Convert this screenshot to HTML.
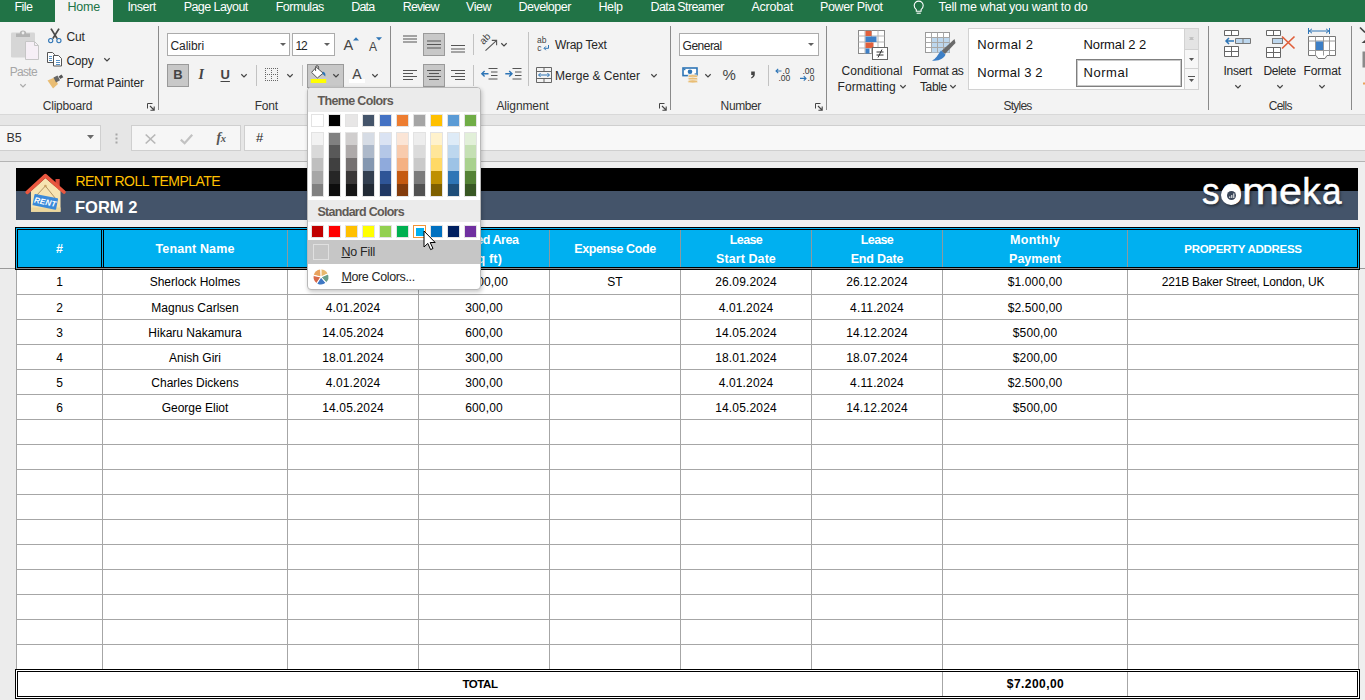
<!DOCTYPE html><html><head><meta charset="utf-8"><title>Rent Roll Template</title><style>
*{box-sizing:border-box;margin:0;padding:0}
html,body{width:1365px;height:700px;overflow:hidden;background:#e6e6e6}
body{position:relative;font-family:"Liberation Sans",sans-serif;font-size:12px;color:#262626}
.abs{position:absolute}
.t{position:absolute;white-space:nowrap;line-height:14px;height:14px}
.c{transform:translateX(-50%)}
#tabs{left:0;top:0;width:1365px;height:22px;background:#217346}
#tabs .t{color:#fff;font-size:12.5px;top:-1px;line-height:16px;height:16px}
#hometab{left:55px;top:0;width:58px;height:23px;background:#f3f3f3}
#ribbon{left:0;top:22px;width:1365px;height:92px;background:#f3f3f3}
#rbot{left:0;top:114px;width:1365px;height:1px;background:#d8d8d8}
.vsep{position:absolute;width:1px;background:#c2c2c2}
.gsep{position:absolute;width:1px;background:#8a8a8a;top:26px;height:84px}
.box{position:absolute;background:#fff;border:1px solid #ababab}
.btnsel{position:absolute;background:#c8c8c8;border:1px solid #9a9a9a}
.lbl{color:#333}
svg{position:absolute;overflow:visible}
/* sheet */
#sheetbg{left:0;top:162px;width:1365px;height:538px;background:#efefef}
.cell{position:absolute;white-space:nowrap;text-align:center;font-size:12px;line-height:14px;color:#000;transform:translateX(-50%)}
.hd{position:absolute;white-space:nowrap;text-align:center;font-size:12.5px;font-weight:bold;line-height:14px;color:#fff;transform:translateX(-50%)}
</style></head><body>
<div id="tabs" class="abs">
<div id="hometab" class="abs"></div>
<div class="t" style="left:14.5px;color:#fff;letter-spacing:-0.539px">File</div>
<div class="t" style="left:67.4px;color:#217346;letter-spacing:-0.186px">Home</div>
<div class="t" style="left:127.4px;color:#fff;letter-spacing:-0.494px">Insert</div>
<div class="t" style="left:183.7px;color:#fff;letter-spacing:-0.564px">Page Layout</div>
<div class="t" style="left:275.7px;color:#fff;letter-spacing:-0.487px">Formulas</div>
<div class="t" style="left:351.2px;color:#fff;letter-spacing:-0.777px">Data</div>
<div class="t" style="left:402.7px;color:#fff;letter-spacing:-0.833px">Review</div>
<div class="t" style="left:466px;color:#fff;letter-spacing:-0.419px">View</div>
<div class="t" style="left:518.5px;color:#fff;letter-spacing:-0.520px">Developer</div>
<div class="t" style="left:598.4px;color:#fff;letter-spacing:-0.355px">Help</div>
<div class="t" style="left:650.6px;color:#fff;letter-spacing:-0.622px">Data Streamer</div>
<div class="t" style="left:751.4px;color:#fff;letter-spacing:-0.228px">Acrobat</div>
<div class="t" style="left:820px;color:#fff;letter-spacing:-0.364px">Power Pivot</div>
<div class="t" style="left:938.6px;color:#fff;letter-spacing:-0.194px">Tell me what you want to do</div>
<svg style="left:912px;top:0px" width="14" height="15" viewBox="0 0 14 15"><path d="M4.3 9.6C2.9 8.6 2.2 7.3 2.2 5.6A4.5 4.5 0 0 1 11.2 5.6C11.2 7.3 10.5 8.6 9.1 9.6V11.3H4.3Z" fill="none" stroke="#fff" stroke-width="1.1"/><path d="M4.6 13.2H8.8" stroke="#fff" stroke-width="1.1"/></svg>
</div>
<div id="ribbon" class="abs"></div><div id="rbot" class="abs"></div>
<svg style="left:10px;top:29px" width="31" height="32" viewBox="0 0 31 32">
<rect x="1" y="3.5" width="24" height="25" rx="1.2" fill="#d6d6d6"/>
<path d="M6 8V4.6H9.8A3.2 3.2 0 0 1 16.2 4.6H20V8Z" fill="#b4b4b4"/>
<circle cx="13" cy="4" r="1.4" fill="#eee"/>
<path d="M15.5 12.5H24.5L28.5 16.5V30.5H15.5Z" fill="#f6eff6" stroke="#c6c6c6" stroke-width="1"/>
<path d="M24.5 12.5V16.5H28.5" fill="none" stroke="#c6c6c6" stroke-width="1"/>
</svg>
<div class="t " style="left:9.7px;top:65.00px;font-size:12px;line-height:14px;height:14px;color:#a6a6a6;letter-spacing:-0.677px;">Paste</div>
<svg style="left:19.5px;top:84.4px" width="6" height="3.2" viewBox="0 0 6 3.2"><path d="M0.3 0.3 L3.0 2.9000000000000004 L5.7 0.3" fill="none" stroke="#aaa" stroke-width="1.2"/></svg>
<svg style="left:47px;top:28px" width="16" height="16" viewBox="0 0 16 16">
<path d="M4 0.6L10.2 10.6M12 0.6L5.8 10.6" stroke="#4a4a4a" stroke-width="1.8" fill="none"/>
<circle cx="3.7" cy="12.6" r="2.1" fill="none" stroke="#2e75b6" stroke-width="1.1"/>
<circle cx="11.9" cy="12.6" r="2.1" fill="none" stroke="#2e75b6" stroke-width="1.1"/>
</svg>
<div class="t " style="left:66.4px;top:30.00px;font-size:12px;line-height:14px;height:14px;color:#262626;letter-spacing:-0.062px;">Cut</div>
<svg style="left:46px;top:51px" width="17" height="16" viewBox="0 0 17 16">
<path d="M1.5 1.5H6.5L8.5 3.5V11.5H1.5Z" fill="#fff" stroke="#555" stroke-width="1"/>
<path d="M3 5H6M3 7H6M3 9H6" stroke="#2e75b6" stroke-width="0.8" shape-rendering="crispEdges"/>
<path d="M7.5 4.5H12.5L15.5 7.5V15H7.5Z" fill="#fff" stroke="#555" stroke-width="1"/>
<path d="M9.5 9H13.5M9.5 11H13.5M9.5 13H13.5" stroke="#2e75b6" stroke-width="0.8" shape-rendering="crispEdges"/>
</svg>
<div class="t " style="left:66.4px;top:54.00px;font-size:12px;line-height:14px;height:14px;color:#262626;letter-spacing:-0.204px;">Copy</div>
<svg style="left:104.0px;top:57.9px" width="6" height="3.2" viewBox="0 0 6 3.2"><path d="M0.3 0.3 L3.0 2.9000000000000004 L5.7 0.3" fill="none" stroke="#444" stroke-width="1.2"/></svg>
<svg style="left:47px;top:74px" width="17" height="16" viewBox="0 0 17 16">
<path d="M0.5 6.5L7.5 3.5L11 10L6 14.5Z" fill="#e9bd74"/>
<path d="M6.5 3.6L10.5 1.6L13 6.2L9 8.6Z" fill="#666"/>
<path d="M11.6 2.6L14.5 0.6L16.3 3.2L13.2 5Z" fill="#555"/>
</svg>
<div class="t " style="left:66.4px;top:76.00px;font-size:12px;line-height:14px;height:14px;color:#262626;letter-spacing:-0.126px;">Format Painter</div>
<div class="t " style="left:42.7px;top:99.00px;font-size:12px;line-height:14px;height:14px;color:#333;letter-spacing:-0.197px;">Clipboard</div>
<svg style="left:147px;top:102.5px" width="8" height="8" viewBox="0 0 8 8"><path d="M0.5 5.5V0.5H5.5" fill="none" stroke="#444" stroke-width="1"/><path d="M3 3L7 7M7.2 3.4V7.2H3.4" fill="none" stroke="#444" stroke-width="1.1"/></svg>
<div class="gsep" style="left:158px"></div>
<div class="box" style="left:167px;top:33px;width:123px;height:23px"></div>
<div class="t " style="left:170.5px;top:39.00px;font-size:12px;line-height:14px;height:14px;color:#262626;letter-spacing:-0.074px;">Calibri</div>
<svg style="left:279.5px;top:43.0px" width="6" height="3" viewBox="0 0 6 3"><path d="M0 0H6L3.0 3Z" fill="#606060"/></svg>
<div class="box" style="left:292px;top:33px;width:43px;height:23px"></div>
<div class="t " style="left:295.6px;top:39.00px;font-size:12px;line-height:14px;height:14px;color:#262626;letter-spacing:-1.180px;">12</div>
<svg style="left:324.0px;top:43.0px" width="6" height="3" viewBox="0 0 6 3"><path d="M0 0H6L3.0 3Z" fill="#606060"/></svg>
<div class="t " style="left:343.5px;top:37.00px;font-size:14.5px;line-height:16.5px;height:16.5px;color:#444;">A</div>
<svg style="left:352.5px;top:36.5px" width="6" height="4" viewBox="0 0 6 4"><path d="M0 3.5L3 0.3L6 3.5Z" fill="#2e75b6"/></svg>
<div class="t " style="left:369px;top:40.00px;font-size:12px;line-height:14px;height:14px;color:#444;">A</div>
<svg style="left:375.5px;top:37px" width="6" height="4" viewBox="0 0 6 4"><path d="M0 0.3H6L3 3.5Z" fill="#2e75b6"/></svg>
<div class="btnsel" style="left:167px;top:64px;width:22px;height:23px"></div>
<div class="t " style="left:173.2px;top:67.00px;font-size:13px;line-height:15px;height:15px;color:#444;font-weight:bold">B</div>
<div class="t " style="left:198.5px;top:67.00px;font-size:13px;line-height:15px;height:15px;color:#444;font-style:italic;font-family:'Liberation Serif',serif;font-weight:bold;font-size:14px">I</div>
<div class="t " style="left:220.5px;top:67.00px;font-size:13px;line-height:15px;height:15px;color:#444;font-weight:bold;text-decoration:underline;text-underline-offset:1.5px">U</div>
<svg style="left:240.5px;top:73.9px" width="6" height="3.2" viewBox="0 0 6 3.2"><path d="M0.3 0.3 L3.0 2.9000000000000004 L5.7 0.3" fill="none" stroke="#444" stroke-width="1.2"/></svg>
<div class="vsep" style="left:256px;top:65px;height:21px"></div>
<svg style="left:265px;top:68px" width="13" height="13" viewBox="0 0 13 13" fill="#666" shape-rendering="crispEdges"><rect x="0" y="0" width="1" height="1"/><rect x="0" y="6" width="1" height="1"/><rect x="0" y="12" width="1" height="1"/><rect x="0" y="0" width="1" height="1"/><rect x="6" y="0" width="1" height="1"/><rect x="12" y="0" width="1" height="1"/><rect x="2" y="0" width="1" height="1"/><rect x="2" y="6" width="1" height="1"/><rect x="2" y="12" width="1" height="1"/><rect x="0" y="2" width="1" height="1"/><rect x="6" y="2" width="1" height="1"/><rect x="12" y="2" width="1" height="1"/><rect x="4" y="0" width="1" height="1"/><rect x="4" y="6" width="1" height="1"/><rect x="4" y="12" width="1" height="1"/><rect x="0" y="4" width="1" height="1"/><rect x="6" y="4" width="1" height="1"/><rect x="12" y="4" width="1" height="1"/><rect x="6" y="0" width="1" height="1"/><rect x="6" y="6" width="1" height="1"/><rect x="6" y="12" width="1" height="1"/><rect x="0" y="6" width="1" height="1"/><rect x="6" y="6" width="1" height="1"/><rect x="12" y="6" width="1" height="1"/><rect x="8" y="0" width="1" height="1"/><rect x="8" y="6" width="1" height="1"/><rect x="8" y="12" width="1" height="1"/><rect x="0" y="8" width="1" height="1"/><rect x="6" y="8" width="1" height="1"/><rect x="12" y="8" width="1" height="1"/><rect x="10" y="0" width="1" height="1"/><rect x="10" y="6" width="1" height="1"/><rect x="10" y="12" width="1" height="1"/><rect x="0" y="10" width="1" height="1"/><rect x="6" y="10" width="1" height="1"/><rect x="12" y="10" width="1" height="1"/><rect x="12" y="0" width="1" height="1"/><rect x="12" y="6" width="1" height="1"/><rect x="12" y="12" width="1" height="1"/><rect x="0" y="12" width="1" height="1"/><rect x="6" y="12" width="1" height="1"/><rect x="12" y="12" width="1" height="1"/></svg>
<svg style="left:286.5px;top:73.9px" width="6" height="3.2" viewBox="0 0 6 3.2"><path d="M0.3 0.3 L3.0 2.9000000000000004 L5.7 0.3" fill="none" stroke="#444" stroke-width="1.2"/></svg>
<div class="vsep" style="left:302px;top:65px;height:21px"></div>
<div class="btnsel" style="left:307px;top:64px;width:37px;height:24px"></div>
<svg style="left:310px;top:65px" width="18" height="19" viewBox="0 0 18 19">
<path d="M6.3 2.2L13.2 8.2L7.3 13L1.6 7.4Z" fill="#fff" stroke="#555" stroke-width="1"/>
<path d="M5.6 6V2.2A1.5 1.5 0 0 1 8.6 2.2V4" fill="none" stroke="#555" stroke-width="1"/>
<path d="M12.8 6.4C15 7 16 9 15.2 11.6C14.2 10.4 13.4 9.6 12.4 9Z" fill="#2e75b6"/>
<rect x="0.8" y="14" width="15.4" height="4" fill="#ffff00"/>
</svg>
<svg style="left:332.5px;top:73.9px" width="6" height="3.2" viewBox="0 0 6 3.2"><path d="M0.3 0.3 L3.0 2.9000000000000004 L5.7 0.3" fill="none" stroke="#444" stroke-width="1.2"/></svg>
<div class="t " style="left:352.3px;top:66.00px;font-size:14px;line-height:16px;height:16px;color:#444;">A</div>
<div class="abs" style="left:349px;top:79px;width:16px;height:4px;background:#fff"></div>
<svg style="left:371.5px;top:73.9px" width="6" height="3.2" viewBox="0 0 6 3.2"><path d="M0.3 0.3 L3.0 2.9000000000000004 L5.7 0.3" fill="none" stroke="#444" stroke-width="1.2"/></svg>
<div class="t " style="left:254.8px;top:99.00px;font-size:12px;line-height:14px;height:14px;color:#333;letter-spacing:-0.279px;">Font</div>
<div class="gsep" style="left:390px"></div>
<svg style="left:403px;top:0px" width="14" height="100" viewBox="0 0 14 100"><rect x="0" y="35.5" width="14" height="1" fill="#555"/><rect x="0" y="38.5" width="14" height="1" fill="#555"/><rect x="0" y="41.5" width="14" height="1" fill="#555"/></svg>
<div class="btnsel" style="left:423px;top:33px;width:22px;height:23px"></div>
<svg style="left:427px;top:0px" width="14" height="100" viewBox="0 0 14 100"><rect x="0" y="40.5" width="14" height="1" fill="#555"/><rect x="0" y="44.0" width="14" height="1" fill="#555"/><rect x="0" y="47.5" width="14" height="1" fill="#555"/></svg>
<svg style="left:451px;top:0px" width="14" height="100" viewBox="0 0 14 100"><rect x="0" y="45.0" width="14" height="1" fill="#555"/><rect x="0" y="48.5" width="14" height="1" fill="#555"/><rect x="0" y="51.5" width="14" height="1" fill="#555"/></svg>
<div class="vsep" style="left:473px;top:34px;height:21px"></div>
<svg style="left:480px;top:34px" width="19" height="19" viewBox="0 0 19 19">
<text x="0" y="0" font-size="10" fill="#444" font-family="Liberation Sans, sans-serif" transform="translate(3.4,11) rotate(-45)">ab</text>
<path d="M5.5 16.6L16.4 6.6M11.8 6.4H16.6V11.2" fill="none" stroke="#555" stroke-width="1.1"/>
</svg>
<svg style="left:501.0px;top:42.9px" width="6" height="3.2" viewBox="0 0 6 3.2"><path d="M0.3 0.3 L3.0 2.9000000000000004 L5.7 0.3" fill="none" stroke="#444" stroke-width="1.2"/></svg>
<div class="vsep" style="left:528px;top:32px;height:54px"></div>
<svg style="left:537px;top:36px" width="14" height="16" viewBox="0 0 14 16">
<text x="0" y="6.5" font-size="8.5" fill="#444" font-family="Liberation Sans, sans-serif">ab</text>
<text x="0.3" y="14.5" font-size="8.5" fill="#444" font-family="Liberation Sans, sans-serif">c</text>
<path d="M11.5 9V12.3H7.2M8.9 10.4L7 12.3L8.9 14.2" fill="none" stroke="#2e75b6" stroke-width="1"/>
</svg>
<div class="t " style="left:555px;top:38.00px;font-size:12px;line-height:14px;height:14px;color:#262626;letter-spacing:-0.231px;">Wrap Text</div>
<svg style="left:403px;top:0px" width="14" height="100" viewBox="0 0 14 100"><rect x="0" y="70.0" width="14" height="1" fill="#555"/><rect x="0" y="73.0" width="10" height="1" fill="#555"/><rect x="0" y="76.0" width="14" height="1" fill="#555"/><rect x="0" y="79.0" width="10" height="1" fill="#555"/></svg>
<div class="btnsel" style="left:423px;top:64px;width:22px;height:23px"></div>
<svg style="left:427px;top:0px" width="14" height="100" viewBox="0 0 14 100"><rect x="0.0" y="70.0" width="14" height="1" fill="#555"/><rect x="2.0" y="73.0" width="10" height="1" fill="#555"/><rect x="0.0" y="76.0" width="14" height="1" fill="#555"/><rect x="2.0" y="79.0" width="10" height="1" fill="#555"/></svg>
<svg style="left:451px;top:0px" width="14" height="100" viewBox="0 0 14 100"><rect x="0" y="70.0" width="14" height="1" fill="#555"/><rect x="4" y="73.0" width="10" height="1" fill="#555"/><rect x="0" y="76.0" width="14" height="1" fill="#555"/><rect x="4" y="79.0" width="10" height="1" fill="#555"/></svg>
<div class="vsep" style="left:473px;top:65px;height:21px"></div>
<svg style="left:481px;top:67px" width="17" height="15" viewBox="0 0 17 15">
<path d="M7.5 1.5H16.5M10 5H16.5M10 8.5H16.5M7.5 12H16.5" stroke="#555" stroke-width="1" fill="none"/>
<path d="M0.8 6.7H7.5M3.6 3.9L0.8 6.7L3.6 9.5" stroke="#2e75b6" stroke-width="1.4" fill="none"/></svg>
<svg style="left:505px;top:67px" width="17" height="15" viewBox="0 0 17 15">
<path d="M7.5 1.5H16.5M10 5H16.5M10 8.5H16.5M7.5 12H16.5" stroke="#555" stroke-width="1" fill="none"/>
<path d="M0.3 6.7H7M4.2 3.9L7 6.7L4.2 9.5" stroke="#2e75b6" stroke-width="1.4" fill="none"/></svg>
<svg style="left:535.5px;top:66.5px" width="16" height="16" viewBox="0 0 16 16">
<path d="M0.5 0.5H15.5V15.5H0.5ZM0.5 4.5H15.5M0.5 11.5H15.5M8 0.5V4.5M8 11.5V15.5" fill="none" stroke="#666" stroke-width="1"/>
<path d="M2.6 8H13.4M4.6 6L2.6 8L4.6 10M11.4 6L13.4 8L11.4 10" fill="none" stroke="#2e75b6" stroke-width="1"/></svg>
<div class="t " style="left:555px;top:69.00px;font-size:12px;line-height:14px;height:14px;color:#262626;letter-spacing:0.021px;">Merge &amp; Center</div>
<svg style="left:650.5px;top:73.9px" width="6" height="3.2" viewBox="0 0 6 3.2"><path d="M0.3 0.3 L3.0 2.9000000000000004 L5.7 0.3" fill="none" stroke="#444" stroke-width="1.2"/></svg>
<div class="t " style="left:496.4px;top:99.00px;font-size:12px;line-height:14px;height:14px;color:#333;letter-spacing:-0.119px;">Alignment</div>
<svg style="left:659px;top:102.5px" width="8" height="8" viewBox="0 0 8 8"><path d="M0.5 5.5V0.5H5.5" fill="none" stroke="#444" stroke-width="1"/><path d="M3 3L7 7M7.2 3.4V7.2H3.4" fill="none" stroke="#444" stroke-width="1.1"/></svg>
<div class="gsep" style="left:670px"></div>
<div class="box" style="left:679px;top:33px;width:140px;height:23px"></div>
<div class="t " style="left:682.6px;top:39.00px;font-size:12px;line-height:14px;height:14px;color:#262626;letter-spacing:-0.515px;">General</div>
<svg style="left:808.0px;top:43.0px" width="6" height="3" viewBox="0 0 6 3"><path d="M0 0H6L3.0 3Z" fill="#606060"/></svg>
<svg style="left:682px;top:66.5px" width="17" height="17" viewBox="0 0 17 17">
<rect x="0.2" y="0.2" width="15.6" height="9.2" fill="#2e75b6"/>
<rect x="1.8" y="1.8" width="12.4" height="6" fill="#fff"/>
<circle cx="8" cy="4.8" r="2.3" fill="#2e75b6"/>
<rect x="1.8" y="1.8" width="1.6" height="1.4" fill="#2e75b6"/><rect x="12.6" y="6.4" width="1.6" height="1.4" fill="#2e75b6"/>
<ellipse cx="10.8" cy="9.2" rx="5" ry="1.6" fill="#e9bd74" stroke="#f3f3f3" stroke-width="0.7"/>
<ellipse cx="10.8" cy="11.8" rx="5" ry="1.6" fill="#e9bd74" stroke="#f3f3f3" stroke-width="0.7"/>
<ellipse cx="10.8" cy="14.4" rx="5" ry="1.6" fill="#e9bd74" stroke="#f3f3f3" stroke-width="0.7"/>
</svg>
<svg style="left:704.5px;top:73.9px" width="6" height="3.2" viewBox="0 0 6 3.2"><path d="M0.3 0.3 L3.0 2.9000000000000004 L5.7 0.3" fill="none" stroke="#444" stroke-width="1.2"/></svg>
<div class="t " style="left:722.5px;top:66.00px;font-size:15px;line-height:17px;height:17px;color:#444;">%</div>
<svg style="left:749.5px;top:70.5px" width="6" height="8" viewBox="0 0 6 8"><path d="M1.2 0.4H4.8V3.2C4.8 5.2 3.6 6.8 1.4 7.4L1 6.5C2.2 6 2.8 5.2 2.9 4H1.2Z" fill="#444"/></svg>
<div class="vsep" style="left:768px;top:65px;height:21px"></div>
<svg style="left:775px;top:67px" width="17" height="16" viewBox="0 0 17 16">
<text x="7.5" y="7.2" font-size="8.6" fill="#333" font-family="Liberation Sans, sans-serif">.0</text>
<text x="3.4" y="14.4" font-size="8.6" fill="#333" font-family="Liberation Sans, sans-serif">.00</text>
<path d="M1 4H6.5M3.2 1.8L1 4L3.2 6.2" fill="none" stroke="#2e75b6" stroke-width="1.1"/></svg>
<svg style="left:799px;top:67px" width="17" height="16" viewBox="0 0 17 16">
<text x="3.4" y="7.2" font-size="8.6" fill="#333" font-family="Liberation Sans, sans-serif">.00</text>
<text x="8.4" y="14.4" font-size="8.6" fill="#333" font-family="Liberation Sans, sans-serif">.0</text>
<path d="M1 11.4H7M4.8 9.2L7 11.4L4.8 13.6" fill="none" stroke="#2e75b6" stroke-width="1.1"/></svg>
<div class="t " style="left:720.6px;top:99.00px;font-size:12px;line-height:14px;height:14px;color:#333;letter-spacing:-0.381px;">Number</div>
<svg style="left:815px;top:102.5px" width="8" height="8" viewBox="0 0 8 8"><path d="M0.5 5.5V0.5H5.5" fill="none" stroke="#444" stroke-width="1"/><path d="M3 3L7 7M7.2 3.4V7.2H3.4" fill="none" stroke="#444" stroke-width="1.1"/></svg>
<div class="gsep" style="left:826px"></div>
<svg style="left:858px;top:30px" width="31" height="31" viewBox="0 0 31 31">
<rect x="0.5" y="0.5" width="26" height="23" fill="#fff" stroke="#8a8a8a"/>
<path d="M7 0.5V23.5M13.5 0.5V23.5M20 0.5V23.5M0.5 6H26.5M0.5 12H26.5M0.5 18H26.5" stroke="#b5b5b5" stroke-width="1" fill="none"/>
<rect x="7.5" y="1" width="6" height="5" fill="#e0603c"/>
<rect x="7.5" y="6.5" width="11" height="5.5" fill="#3d7fc6"/>
<rect x="7.5" y="12.5" width="8" height="5.5" fill="#e0603c"/>
<rect x="7.5" y="18.5" width="4" height="5" fill="#3d7fc6"/>
<rect x="14.5" y="17.5" width="15" height="12" fill="#fff" stroke="#666"/>
<path d="M18.5 22H25.5M18.5 25H25.5M24 19.5L20 27.5" stroke="#333" stroke-width="1" fill="none"/>
</svg>
<div class="t " style="left:841.5px;top:64.00px;font-size:12px;line-height:14px;height:14px;color:#262626;letter-spacing:0.078px;">Conditional</div>
<div class="t " style="left:837.5px;top:80.00px;font-size:12px;line-height:14px;height:14px;color:#262626;letter-spacing:0.094px;">Formatting</div>
<svg style="left:900.0px;top:85.4px" width="6" height="3.2" viewBox="0 0 6 3.2"><path d="M0.3 0.3 L3.0 2.9000000000000004 L5.7 0.3" fill="none" stroke="#444" stroke-width="1.2"/></svg>
<svg style="left:925px;top:32px" width="31" height="31" viewBox="0 0 31 31">
<rect x="0.5" y="0.5" width="24" height="20" fill="#fff" stroke="#9a9a9a"/>
<rect x="6.5" y="5.5" width="18" height="15" fill="#bdd7ee"/>
<path d="M6.5 0.5V20.5M12.5 0.5V20.5M18.5 0.5V20.5M0.5 5.5H24.5M0.5 10.5H24.5M0.5 15.5H24.5" stroke="#a8a8a8" stroke-width="1" fill="none"/>
<path d="M29.5 7L30.5 11L20 22L16.5 19Z" fill="#6a6a6a"/>
<path d="M16 18.5L20.5 22.5C19.5 26 14 29.5 7 28.5C11 27 12.5 23 16 18.5Z" fill="#3d7fc6"/>
</svg>
<div class="t " style="left:912.7px;top:64.00px;font-size:12px;line-height:14px;height:14px;color:#262626;letter-spacing:-0.357px;">Format as</div>
<div class="t " style="left:920px;top:80.00px;font-size:12px;line-height:14px;height:14px;color:#262626;letter-spacing:-0.377px;">Table</div>
<svg style="left:950.0px;top:85.4px" width="6" height="3.2" viewBox="0 0 6 3.2"><path d="M0.3 0.3 L3.0 2.9000000000000004 L5.7 0.3" fill="none" stroke="#444" stroke-width="1.2"/></svg>
<div class="box" style="left:968px;top:28px;width:231px;height:62px;border-color:#d2d2d2"></div>
<div class="abs" style="left:1184px;top:29px;width:14px;height:60px;background:#f7f7f7;border-left:1px solid #d2d2d2"></div>
<div class="abs" style="left:1184px;top:29px;width:14px;height:20px;background:#e4e4e4;border-left:1px solid #d2d2d2"></div>
<div class="abs" style="left:1184px;top:49px;width:14px;height:1px;background:#d2d2d2"></div>
<div class="abs" style="left:1184px;top:68px;width:14px;height:1px;background:#d2d2d2"></div>
<svg style="left:1189.0px;top:37.0px" width="5" height="3" viewBox="0 0 5 3"><path d="M0 0H5L2.5 3Z" fill="#c4c4c4"/></svg>
<svg style="left:1189px;top:37px" width="5" height="3" viewBox="0 0 5 3"><path d="M0 3L2.5 0L5 3Z" fill="#c0c0c0"/></svg>
<svg style="left:1189.0px;top:58.0px" width="5" height="3" viewBox="0 0 5 3"><path d="M0 0H5L2.5 3Z" fill="#555"/></svg>
<div class="abs" style="left:1188px;top:76px;width:7px;height:1px;background:#555"></div>
<svg style="left:1189.0px;top:79.0px" width="5" height="3" viewBox="0 0 5 3"><path d="M0 0H5L2.5 3Z" fill="#555"/></svg>
<div class="t " style="left:977.3px;top:37.00px;font-size:13px;line-height:15px;height:15px;color:#111;letter-spacing:0.406px;">Normal 2</div>
<div class="t " style="left:1083.5px;top:37.00px;font-size:13px;line-height:15px;height:15px;color:#111;letter-spacing:-0.108px;">Normal 2 2</div>
<div class="t " style="left:977.3px;top:65.00px;font-size:13px;line-height:15px;height:15px;color:#111;letter-spacing:0.192px;">Normal 3 2</div>
<div class="abs" style="left:1076px;top:59px;width:106px;height:28px;border:1px solid #7f7f7f;background:#fff"></div>
<div class="abs" style="left:1077px;top:60px;width:104px;height:26px;border:1px solid #c8c8c8"></div>
<div class="t " style="left:1083.5px;top:65.00px;font-size:13px;line-height:15px;height:15px;color:#111;letter-spacing:0.549px;">Normal</div>
<div class="t " style="left:1003.5px;top:99.00px;font-size:12px;line-height:14px;height:14px;color:#333;letter-spacing:-0.781px;">Styles</div>
<div class="gsep" style="left:1208px"></div>
<svg style="left:1224px;top:30px" width="28" height="28" viewBox="0 0 28 28">
<path d="M0.5 0.5H14.5V5.5H0.5ZM7.5 0.5V5.5" fill="#fff" stroke="#666"/>
<path d="M0.5 16.5H14.5V26.5H0.5ZM7.5 16.5V26.5M0.5 21.5H14.5" fill="#fff" stroke="#666"/>
<path d="M11.5 8.5H26.5V13.5H11.5ZM19 8.5V13.5" fill="#bdd7ee" stroke="#777"/>
<path d="M2 11H10M5 8L2 11L5 14" fill="none" stroke="#2e75b6" stroke-width="1.5"/>
</svg>
<div class="t " style="left:1223.5px;top:64.00px;font-size:12px;line-height:14px;height:14px;color:#262626;letter-spacing:-0.286px;">Insert</div>
<svg style="left:1234.5px;top:84.9px" width="6" height="3.2" viewBox="0 0 6 3.2"><path d="M0.3 0.3 L3.0 2.9000000000000004 L5.7 0.3" fill="none" stroke="#444" stroke-width="1.2"/></svg>
<svg style="left:1266px;top:30px" width="30" height="28" viewBox="0 0 30 28">
<path d="M0.5 0.5H14.5V5.5H0.5ZM7.5 0.5V5.5" fill="#fff" stroke="#666"/>
<path d="M0.5 17.5H14.5V27.5H0.5ZM7.5 17.5V27.5M0.5 22.5H14.5" fill="#fff" stroke="#666"/>
<rect x="6.5" y="8.5" width="10" height="5" fill="#bdd7ee" stroke="#7a7a7a"/>
<path d="M16 6.5L28.5 18.5M28.5 6.5L16 18.5" fill="none" stroke="#e0603c" stroke-width="1.7"/>
</svg>
<div class="t " style="left:1263.5px;top:64.00px;font-size:12px;line-height:14px;height:14px;color:#262626;letter-spacing:-0.398px;">Delete</div>
<svg style="left:1276.5px;top:84.9px" width="6" height="3.2" viewBox="0 0 6 3.2"><path d="M0.3 0.3 L3.0 2.9000000000000004 L5.7 0.3" fill="none" stroke="#444" stroke-width="1.2"/></svg>
<svg style="left:1308px;top:28px" width="28" height="32" viewBox="0 0 28 32">
<path d="M0.5 0V6M21.5 0V6M1 3H21M4 0.8L1.2 3L4 5.2M18 0.8L20.8 3L18 5.2" fill="none" stroke="#2e75b6" stroke-width="1"/>
<path d="M0.5 8.5H27.5V27.5H19L17 30.5H10L8 27.5H0.5Z" fill="#fff" stroke="#777"/>
<path d="M7.5 8.5V27.5M15.5 8.5V27.5M21.5 8.5V27.5M0.5 13H27.5M0.5 22.5H27.5" fill="none" stroke="#9a9a9a"/>
<rect x="8" y="13.5" width="7" height="8.5" fill="#3d7fc6"/>
</svg>
<div class="t " style="left:1303.5px;top:64.00px;font-size:12px;line-height:14px;height:14px;color:#262626;letter-spacing:-0.086px;">Format</div>
<svg style="left:1319.0px;top:84.9px" width="6" height="3.2" viewBox="0 0 6 3.2"><path d="M0.3 0.3 L3.0 2.9000000000000004 L5.7 0.3" fill="none" stroke="#444" stroke-width="1.2"/></svg>
<div class="t " style="left:1268.7px;top:99.00px;font-size:12px;line-height:14px;height:14px;color:#333;letter-spacing:-0.714px;">Cells</div>
<div class="gsep" style="left:1351px"></div>
<svg style="left:1359px;top:26px" width="6" height="62" viewBox="0 0 6 62">
<path d="M1 1.5L6 6.5" stroke="#444" stroke-width="1.6" fill="none"/>
<path d="M2.5 17L6 14V17Z" fill="#444"/>
<rect x="3.5" y="25.5" width="4" height="16" fill="#8a8a8a"/>
<rect x="4" y="56.5" width="3" height="2" fill="#e9a25c"/>
</svg>
<div class="abs" style="left:0;top:115px;width:1365px;height:46px;background:#e6e6e6"></div>
<div class="abs" style="left:0;top:161px;width:1365px;height:1px;background:#b4b4b4"></div>
<div class="box" style="left:-1px;top:125px;width:102px;height:26px;border-color:#cfcfcf;background:#f6f6f6"></div>
<div class="t" style="left:6.5px;top:131px;font-size:12.5px;color:#333">B5</div>
<div class="box" style="left:131px;top:125px;width:110px;height:26px;border-color:#cfcfcf;background:#f6f6f6"></div>
<div class="box" style="left:244px;top:125px;width:1125px;height:26px;border-color:#cfcfcf;background:#f8f8f8"></div>
<div class="t" style="left:256px;top:131px;font-size:13px;color:#222">#</div>
<svg style="left:86.5px;top:135px" width="7" height="4" viewBox="0 0 7 4"><path d="M0 0H7L3.5 4Z" fill="#6a6a6a"/></svg>
<svg style="left:114.5px;top:133px" width="3" height="11" viewBox="0 0 3 11"><rect x="0.5" y="0.5" width="2" height="2" fill="#a6a6a6"/><rect x="0.5" y="4.5" width="2" height="2" fill="#a6a6a6"/><rect x="0.5" y="8.5" width="2" height="2" fill="#a6a6a6"/></svg>
<svg style="left:144.5px;top:133.5px" width="11" height="10" viewBox="0 0 11 10"><path d="M0.7 0.5L10.3 9.5M10.3 0.5L0.7 9.5" stroke="#b8b8b8" stroke-width="1.7" fill="none"/></svg>
<svg style="left:180px;top:133.5px" width="13" height="10" viewBox="0 0 13 10"><path d="M0.8 5.6L4.6 9.2L12.2 0.8" stroke="#c2c2c2" stroke-width="2.2" fill="none"/></svg>
<div class="t" style="left:216.5px;top:130px;font-family:'Liberation Serif',serif;font-style:italic;font-weight:bold;font-size:14px;line-height:16px;height:16px;color:#555;letter-spacing:-0.5px">f<span style="font-size:10.5px">x</span></div>

<div id="sheetbg" class="abs"></div>
<div class="abs" style="left:0;top:162px;width:16px;height:538px;background:#ececec"></div>
<div class="abs" style="left:16px;top:168px;width:1342px;height:23px;background:#000"></div>
<div class="abs" style="left:16px;top:191px;width:1342px;height:29px;background:#44546a"></div>
<div class="t" style="left:75.5px;top:173px;font-size:14px;line-height:16px;height:16px;color:#ffc000;letter-spacing:-0.545px">RENT ROLL TEMPLATE</div>
<div class="t" style="left:75px;top:197px;font-size:16.5px;line-height:20px;height:20px;color:#fff;font-weight:bold">FORM 2</div>
<svg style="left:24px;top:172px" width="42" height="44" viewBox="0 0 42 44">
<rect x="31.5" y="7" width="4.2" height="10" fill="#d9483b"/>
<path d="M7 19L21.4 6L36.5 19V39.8H7Z" fill="#f7e4b2"/>
<path d="M7 35.5H36.5V39.8H7Z" fill="#ecd79e"/>
<path d="M21.4 14L11.5 24.5M21.4 14L31.5 26.5" stroke="#a9895a" stroke-width="0.9" fill="none"/>
<circle cx="21.4" cy="14" r="1.3" fill="#c9a063"/>
<path d="M3.2 20.3L21.4 3.6L40 20" fill="none" stroke="#e9573f" stroke-width="3.6" stroke-linecap="round" stroke-linejoin="round"/>
<g transform="translate(21.3,29.8) rotate(11)">
<rect x="-12" y="-5.8" width="24" height="11.6" rx="0.8" fill="#3b8ad9"/>
<text x="0" y="3" text-anchor="middle" font-family="Liberation Sans, sans-serif" font-size="8" font-weight="bold" font-style="italic" fill="#fff" letter-spacing="0.2">RENT</text>
</g>
</svg>
<div class="t" style="left:1201px;top:171px;width:160px;font-size:37px;line-height:42px;height:42px;color:#fff;-webkit-text-stroke:0.5px #fff;text-shadow:1px 2px 3px rgba(0,0,0,0.55)"><span style="position:absolute;left:0.8px;top:0;transform:scaleX(0.95);transform-origin:0 0">s</span><span style="position:absolute;left:20.6px;top:0;transform:scaleX(1);transform-origin:0 0">o</span><span style="position:absolute;left:40.6px;top:0;transform:scaleX(1.196);transform-origin:0 0">m</span><span style="position:absolute;left:77.7px;top:0;transform:scaleX(1.11);transform-origin:0 0">e</span><span style="position:absolute;left:101.2px;top:0;transform:scaleX(1.0);transform-origin:0 0">k</span><span style="position:absolute;left:120.6px;top:0;transform:scaleX(0.95);transform-origin:0 0">a</span></div>
<div class="abs" style="left:1221px;top:185px;width:20px;height:20px;border-radius:50%;background:#fff"></div>
<div class="abs" style="left:1226.5px;top:190.5px;width:9px;height:9px;border-radius:50%;background:#3a4659"></div>
<svg style="left:1228.5px;top:192.5px" width="6" height="5" viewBox="0 0 6 5"><path d="M0.8 5V3.4M2.8 5V2M4.8 5V0.4" stroke="#fff" stroke-width="1"/></svg>

<div class="abs" style="left:16px;top:270px;width:1343px;height:400px;background:#fff"></div>
<div class="abs" style="left:15px;top:227px;width:1345px;height:43px;background:#00b0f0;border:1px solid #000"></div>
<div class="abs" style="left:17px;top:229px;width:1341px;height:39px;border:1px solid #000"></div>
<div class="abs" style="left:287px;top:230px;width:1px;height:37px;background:#8c9aa0"></div>
<div class="abs" style="left:418px;top:230px;width:1px;height:37px;background:#8c9aa0"></div>
<div class="abs" style="left:549px;top:230px;width:1px;height:37px;background:#8c9aa0"></div>
<div class="abs" style="left:680px;top:230px;width:1px;height:37px;background:#8c9aa0"></div>
<div class="abs" style="left:811px;top:230px;width:1px;height:37px;background:#8c9aa0"></div>
<div class="abs" style="left:942px;top:230px;width:1px;height:37px;background:#8c9aa0"></div>
<div class="abs" style="left:1127px;top:230px;width:1px;height:37px;background:#8c9aa0"></div>
<div class="abs" style="left:101px;top:229px;width:1px;height:39px;background:#000"></div>
<div class="abs" style="left:103px;top:229px;width:1px;height:39px;background:#000"></div>
<div class="abs" style="left:16px;top:268px;width:1343px;height:1px;background:#8a8a8a"></div>
<div class="abs" style="left:0;top:268px;width:15px;height:1px;background:#9a9a9a"></div>
<div class="abs" style="left:1360px;top:268px;width:6px;height:1px;background:#9a9a9a"></div>
<div class="abs" style="left:16px;top:294px;width:1343px;height:1px;background:#a6a6a6"></div>
<div class="abs" style="left:16px;top:319px;width:1343px;height:1px;background:#a6a6a6"></div>
<div class="abs" style="left:16px;top:344px;width:1343px;height:1px;background:#a6a6a6"></div>
<div class="abs" style="left:16px;top:369px;width:1343px;height:1px;background:#a6a6a6"></div>
<div class="abs" style="left:16px;top:394px;width:1343px;height:1px;background:#a6a6a6"></div>
<div class="abs" style="left:16px;top:419px;width:1343px;height:1px;background:#a6a6a6"></div>
<div class="abs" style="left:16px;top:444px;width:1343px;height:1px;background:#a6a6a6"></div>
<div class="abs" style="left:16px;top:469px;width:1343px;height:1px;background:#a6a6a6"></div>
<div class="abs" style="left:16px;top:494px;width:1343px;height:1px;background:#a6a6a6"></div>
<div class="abs" style="left:16px;top:519px;width:1343px;height:1px;background:#a6a6a6"></div>
<div class="abs" style="left:16px;top:544px;width:1343px;height:1px;background:#a6a6a6"></div>
<div class="abs" style="left:16px;top:569px;width:1343px;height:1px;background:#a6a6a6"></div>
<div class="abs" style="left:16px;top:594px;width:1343px;height:1px;background:#a6a6a6"></div>
<div class="abs" style="left:16px;top:619px;width:1343px;height:1px;background:#a6a6a6"></div>
<div class="abs" style="left:16px;top:644px;width:1343px;height:1px;background:#a6a6a6"></div>
<div class="abs" style="left:16px;top:669px;width:1343px;height:1px;background:#a6a6a6"></div>
<div class="abs" style="left:16px;top:270px;width:1px;height:400px;background:#a6a6a6"></div>
<div class="abs" style="left:102px;top:270px;width:1px;height:400px;background:#a6a6a6"></div>
<div class="abs" style="left:287px;top:270px;width:1px;height:400px;background:#a6a6a6"></div>
<div class="abs" style="left:418px;top:270px;width:1px;height:400px;background:#a6a6a6"></div>
<div class="abs" style="left:549px;top:270px;width:1px;height:400px;background:#a6a6a6"></div>
<div class="abs" style="left:680px;top:270px;width:1px;height:400px;background:#a6a6a6"></div>
<div class="abs" style="left:811px;top:270px;width:1px;height:400px;background:#a6a6a6"></div>
<div class="abs" style="left:942px;top:270px;width:1px;height:400px;background:#a6a6a6"></div>
<div class="abs" style="left:1127px;top:270px;width:1px;height:400px;background:#a6a6a6"></div>
<div class="abs" style="left:1358px;top:270px;width:1px;height:400px;background:#a6a6a6"></div>
<div class="abs" style="left:15px;top:669px;width:1345px;height:30px;background:#fff;border:3px double #000"></div>
<div class="abs" style="left:942px;top:672px;width:1px;height:24px;background:#a6a6a6"></div>
<div class="abs" style="left:1127px;top:672px;width:1px;height:24px;background:#a6a6a6"></div>
<div class="hd" style="left:59.5px;top:242px;font-size:12.5px">#</div>
<div class="hd" style="left:195.0px;top:242px;font-size:12.5px;letter-spacing:0.129px">Tenant Name</div>
<div class="hd" style="left:353.0px;top:233px;font-size:12.5px;letter-spacing:-0.631px">Lease</div>
<div class="hd" style="left:353.0px;top:252px;font-size:12.5px;letter-spacing:-0.273px">Date</div>
<div class="hd" style="left:484.0px;top:233px;font-size:12.5px;letter-spacing:-0.445px">Leased Area</div>
<div class="hd" style="left:484.0px;top:252px;font-size:12.5px;letter-spacing:0.183px">(sq ft)</div>
<div class="hd" style="left:615.0px;top:242px;font-size:12.5px;letter-spacing:-0.378px">Expense Code</div>
<div class="hd" style="left:746.0px;top:233px;font-size:12.5px;letter-spacing:-0.631px">Lease</div>
<div class="hd" style="left:746.0px;top:252px;font-size:12.5px;letter-spacing:0.075px">Start Date</div>
<div class="hd" style="left:877.0px;top:233px;font-size:12.5px;letter-spacing:-0.631px">Lease</div>
<div class="hd" style="left:877.0px;top:252px;font-size:12.5px;letter-spacing:-0.186px">End Date</div>
<div class="hd" style="left:1035.0px;top:233px;font-size:12.5px;letter-spacing:0.297px">Monthly</div>
<div class="hd" style="left:1035.0px;top:252px;font-size:12.5px;letter-spacing:-0.044px">Payment</div>
<div class="hd" style="left:1243.0px;top:242px;font-size:11.5px;letter-spacing:-0.285px">PROPERTY ADDRESS</div>
<div class="cell" style="left:59.5px;top:275px">1</div>
<div class="cell" style="left:195.0px;top:275px">Sherlock Holmes</div>
<div class="cell" style="left:353.0px;top:275px;letter-spacing:0.15px">26.09.2024</div>
<div class="cell" style="left:484.0px;top:275px;letter-spacing:0.15px">1.000,00</div>
<div class="cell" style="left:615.0px;top:275px">ST</div>
<div class="cell" style="left:746.0px;top:275px;letter-spacing:0.15px">26.09.2024</div>
<div class="cell" style="left:877.0px;top:275px;letter-spacing:0.15px">26.12.2024</div>
<div class="cell" style="left:1035.0px;top:275px;letter-spacing:0.15px">$1.000,00</div>
<div class="cell" style="left:1243.0px;top:275px;letter-spacing:-0.190px">221B Baker Street, London, UK</div>
<div class="cell" style="left:59.5px;top:301px">2</div>
<div class="cell" style="left:195.0px;top:301px">Magnus Carlsen</div>
<div class="cell" style="left:353.0px;top:301px;letter-spacing:0.15px">4.01.2024</div>
<div class="cell" style="left:484.0px;top:301px;letter-spacing:0.15px">300,00</div>
<div class="cell" style="left:746.0px;top:301px;letter-spacing:0.15px">4.01.2024</div>
<div class="cell" style="left:877.0px;top:301px;letter-spacing:0.15px">4.11.2024</div>
<div class="cell" style="left:1035.0px;top:301px;letter-spacing:0.15px">$2.500,00</div>
<div class="cell" style="left:59.5px;top:326px">3</div>
<div class="cell" style="left:195.0px;top:326px">Hikaru Nakamura</div>
<div class="cell" style="left:353.0px;top:326px;letter-spacing:0.15px">14.05.2024</div>
<div class="cell" style="left:484.0px;top:326px;letter-spacing:0.15px">600,00</div>
<div class="cell" style="left:746.0px;top:326px;letter-spacing:0.15px">14.05.2024</div>
<div class="cell" style="left:877.0px;top:326px;letter-spacing:0.15px">14.12.2024</div>
<div class="cell" style="left:1035.0px;top:326px;letter-spacing:0.15px">$500,00</div>
<div class="cell" style="left:59.5px;top:351px">4</div>
<div class="cell" style="left:195.0px;top:351px">Anish Giri</div>
<div class="cell" style="left:353.0px;top:351px;letter-spacing:0.15px">18.01.2024</div>
<div class="cell" style="left:484.0px;top:351px;letter-spacing:0.15px">300,00</div>
<div class="cell" style="left:746.0px;top:351px;letter-spacing:0.15px">18.01.2024</div>
<div class="cell" style="left:877.0px;top:351px;letter-spacing:0.15px">18.07.2024</div>
<div class="cell" style="left:1035.0px;top:351px;letter-spacing:0.15px">$200,00</div>
<div class="cell" style="left:59.5px;top:376px">5</div>
<div class="cell" style="left:195.0px;top:376px">Charles Dickens</div>
<div class="cell" style="left:353.0px;top:376px;letter-spacing:0.15px">4.01.2024</div>
<div class="cell" style="left:484.0px;top:376px;letter-spacing:0.15px">300,00</div>
<div class="cell" style="left:746.0px;top:376px;letter-spacing:0.15px">4.01.2024</div>
<div class="cell" style="left:877.0px;top:376px;letter-spacing:0.15px">4.11.2024</div>
<div class="cell" style="left:1035.0px;top:376px;letter-spacing:0.15px">$2.500,00</div>
<div class="cell" style="left:59.5px;top:401px">6</div>
<div class="cell" style="left:195.0px;top:401px">George Eliot</div>
<div class="cell" style="left:353.0px;top:401px;letter-spacing:0.15px">14.05.2024</div>
<div class="cell" style="left:484.0px;top:401px;letter-spacing:0.15px">600,00</div>
<div class="cell" style="left:746.0px;top:401px;letter-spacing:0.15px">14.05.2024</div>
<div class="cell" style="left:877.0px;top:401px;letter-spacing:0.15px">14.12.2024</div>
<div class="cell" style="left:1035.0px;top:401px;letter-spacing:0.15px">$500,00</div>
<div class="cell" style="left:480px;top:677px;font-weight:bold;font-size:11.5px;letter-spacing:-0.453px">TOTAL</div>
<div class="cell" style="left:1035.5px;top:677px;font-weight:bold;letter-spacing:0.445px">$7.200,00</div>
<div class="abs" style="left:307px;top:87px;width:174px;height:203px;background:#fff;border:1px solid #b8b8b8;border-radius:4px;box-shadow:1px 2px 4px rgba(0,0,0,0.22);overflow:hidden">
<div class="abs" style="left:0px;top:0px;width:172px;height:24px;background:#ebebeb;"></div>
<div class="abs" style="left:0px;top:112px;width:172px;height:22px;background:#ebebeb;"></div>
<div class="abs" style="left:0px;top:152px;width:172px;height:24px;background:#c6c6c6;"></div>
<div class="t" style="left:9.5px;top:5.92px;font-size:12.5px;line-height:14.5px;height:14.5px;color:#5f5a55;font-weight:bold;letter-spacing:-0.655px;">Theme Colors</div>
<div class="t" style="left:9.5px;top:116.92px;font-size:12.5px;line-height:14.5px;height:14.5px;color:#5f5a55;font-weight:bold;letter-spacing:-0.717px;">Standard Colors</div>
<div class="abs" style="left:3px;top:26px;width:13px;height:13px;background:#ffffff;border:1px solid #e3e3e3"></div>
<div class="abs" style="left:3px;top:44px;width:13px;height:65px;background:#e3e3e3;"></div>
<div class="abs" style="left:4px;top:45px;width:11px;height:12px;background:#f2f2f2;"></div>
<div class="abs" style="left:4px;top:57px;width:11px;height:13px;background:#d9d9d9;"></div>
<div class="abs" style="left:4px;top:70px;width:11px;height:13px;background:#bfbfbf;"></div>
<div class="abs" style="left:4px;top:83px;width:11px;height:13px;background:#a6a6a6;"></div>
<div class="abs" style="left:4px;top:96px;width:11px;height:12px;background:#808080;"></div>
<div class="abs" style="left:20px;top:26px;width:13px;height:13px;background:#000000;border:1px solid #e3e3e3"></div>
<div class="abs" style="left:20px;top:44px;width:13px;height:65px;background:#e3e3e3;"></div>
<div class="abs" style="left:21px;top:45px;width:11px;height:12px;background:#808080;"></div>
<div class="abs" style="left:21px;top:57px;width:11px;height:13px;background:#595959;"></div>
<div class="abs" style="left:21px;top:70px;width:11px;height:13px;background:#404040;"></div>
<div class="abs" style="left:21px;top:83px;width:11px;height:13px;background:#262626;"></div>
<div class="abs" style="left:21px;top:96px;width:11px;height:12px;background:#0d0d0d;"></div>
<div class="abs" style="left:37px;top:26px;width:13px;height:13px;background:#e7e6e6;border:1px solid #e3e3e3"></div>
<div class="abs" style="left:37px;top:44px;width:13px;height:65px;background:#e3e3e3;"></div>
<div class="abs" style="left:38px;top:45px;width:11px;height:12px;background:#d0cece;"></div>
<div class="abs" style="left:38px;top:57px;width:11px;height:13px;background:#aeaaaa;"></div>
<div class="abs" style="left:38px;top:70px;width:11px;height:13px;background:#757171;"></div>
<div class="abs" style="left:38px;top:83px;width:11px;height:13px;background:#3a3838;"></div>
<div class="abs" style="left:38px;top:96px;width:11px;height:12px;background:#161616;"></div>
<div class="abs" style="left:54px;top:26px;width:13px;height:13px;background:#44546a;border:1px solid #e3e3e3"></div>
<div class="abs" style="left:54px;top:44px;width:13px;height:65px;background:#e3e3e3;"></div>
<div class="abs" style="left:55px;top:45px;width:11px;height:12px;background:#d6dce5;"></div>
<div class="abs" style="left:55px;top:57px;width:11px;height:13px;background:#adb9ca;"></div>
<div class="abs" style="left:55px;top:70px;width:11px;height:13px;background:#8497b0;"></div>
<div class="abs" style="left:55px;top:83px;width:11px;height:13px;background:#333f50;"></div>
<div class="abs" style="left:55px;top:96px;width:11px;height:12px;background:#222a35;"></div>
<div class="abs" style="left:71px;top:26px;width:13px;height:13px;background:#4472c4;border:1px solid #e3e3e3"></div>
<div class="abs" style="left:71px;top:44px;width:13px;height:65px;background:#e3e3e3;"></div>
<div class="abs" style="left:72px;top:45px;width:11px;height:12px;background:#dae3f3;"></div>
<div class="abs" style="left:72px;top:57px;width:11px;height:13px;background:#b4c7e7;"></div>
<div class="abs" style="left:72px;top:70px;width:11px;height:13px;background:#8faadc;"></div>
<div class="abs" style="left:72px;top:83px;width:11px;height:13px;background:#2f5597;"></div>
<div class="abs" style="left:72px;top:96px;width:11px;height:12px;background:#203864;"></div>
<div class="abs" style="left:88px;top:26px;width:13px;height:13px;background:#ed7d31;border:1px solid #e3e3e3"></div>
<div class="abs" style="left:88px;top:44px;width:13px;height:65px;background:#e3e3e3;"></div>
<div class="abs" style="left:89px;top:45px;width:11px;height:12px;background:#fbe5d6;"></div>
<div class="abs" style="left:89px;top:57px;width:11px;height:13px;background:#f8cbad;"></div>
<div class="abs" style="left:89px;top:70px;width:11px;height:13px;background:#f4b183;"></div>
<div class="abs" style="left:89px;top:83px;width:11px;height:13px;background:#c55a11;"></div>
<div class="abs" style="left:89px;top:96px;width:11px;height:12px;background:#843c0c;"></div>
<div class="abs" style="left:105px;top:26px;width:13px;height:13px;background:#a5a5a5;border:1px solid #e3e3e3"></div>
<div class="abs" style="left:105px;top:44px;width:13px;height:65px;background:#e3e3e3;"></div>
<div class="abs" style="left:106px;top:45px;width:11px;height:12px;background:#ededed;"></div>
<div class="abs" style="left:106px;top:57px;width:11px;height:13px;background:#dbdbdb;"></div>
<div class="abs" style="left:106px;top:70px;width:11px;height:13px;background:#c9c9c9;"></div>
<div class="abs" style="left:106px;top:83px;width:11px;height:13px;background:#7c7c7c;"></div>
<div class="abs" style="left:106px;top:96px;width:11px;height:12px;background:#525252;"></div>
<div class="abs" style="left:122px;top:26px;width:13px;height:13px;background:#ffc000;border:1px solid #e3e3e3"></div>
<div class="abs" style="left:122px;top:44px;width:13px;height:65px;background:#e3e3e3;"></div>
<div class="abs" style="left:123px;top:45px;width:11px;height:12px;background:#fff2cc;"></div>
<div class="abs" style="left:123px;top:57px;width:11px;height:13px;background:#ffe699;"></div>
<div class="abs" style="left:123px;top:70px;width:11px;height:13px;background:#ffd966;"></div>
<div class="abs" style="left:123px;top:83px;width:11px;height:13px;background:#bf9000;"></div>
<div class="abs" style="left:123px;top:96px;width:11px;height:12px;background:#7f6000;"></div>
<div class="abs" style="left:139px;top:26px;width:13px;height:13px;background:#5b9bd5;border:1px solid #e3e3e3"></div>
<div class="abs" style="left:139px;top:44px;width:13px;height:65px;background:#e3e3e3;"></div>
<div class="abs" style="left:140px;top:45px;width:11px;height:12px;background:#deebf7;"></div>
<div class="abs" style="left:140px;top:57px;width:11px;height:13px;background:#bdd7ee;"></div>
<div class="abs" style="left:140px;top:70px;width:11px;height:13px;background:#9dc3e6;"></div>
<div class="abs" style="left:140px;top:83px;width:11px;height:13px;background:#2e75b6;"></div>
<div class="abs" style="left:140px;top:96px;width:11px;height:12px;background:#1f4e79;"></div>
<div class="abs" style="left:156px;top:26px;width:13px;height:13px;background:#70ad47;border:1px solid #e3e3e3"></div>
<div class="abs" style="left:156px;top:44px;width:13px;height:65px;background:#e3e3e3;"></div>
<div class="abs" style="left:157px;top:45px;width:11px;height:12px;background:#e2f0d9;"></div>
<div class="abs" style="left:157px;top:57px;width:11px;height:13px;background:#c5e0b4;"></div>
<div class="abs" style="left:157px;top:70px;width:11px;height:13px;background:#a9d18e;"></div>
<div class="abs" style="left:157px;top:83px;width:11px;height:13px;background:#548235;"></div>
<div class="abs" style="left:157px;top:96px;width:11px;height:12px;background:#385723;"></div>
<div class="abs" style="left:3px;top:137px;width:13px;height:13px;background:#c00000;border:1px solid #e3e3e3"></div>
<div class="abs" style="left:20px;top:137px;width:13px;height:13px;background:#ff0000;border:1px solid #e3e3e3"></div>
<div class="abs" style="left:37px;top:137px;width:13px;height:13px;background:#ffc000;border:1px solid #e3e3e3"></div>
<div class="abs" style="left:54px;top:137px;width:13px;height:13px;background:#ffff00;border:1px solid #e3e3e3"></div>
<div class="abs" style="left:71px;top:137px;width:13px;height:13px;background:#92d050;border:1px solid #e3e3e3"></div>
<div class="abs" style="left:88px;top:137px;width:13px;height:13px;background:#00b050;border:1px solid #e3e3e3"></div>
<div class="abs" style="left:105px;top:137px;width:13px;height:13px;background:#fff;border:1.5px solid #f29436"></div>
<div class="abs" style="left:107.5px;top:139.5px;width:8px;height:8px;background:#00b0f0;"></div>
<div class="abs" style="left:122px;top:137px;width:13px;height:13px;background:#0070c0;border:1px solid #e3e3e3"></div>
<div class="abs" style="left:139px;top:137px;width:13px;height:13px;background:#002060;border:1px solid #e3e3e3"></div>
<div class="abs" style="left:156px;top:137px;width:13px;height:13px;background:#7030a0;border:1px solid #e3e3e3"></div>
<div class="abs" style="left:5px;top:156px;width:16px;height:16px;background:#c6c6c6;border:1px solid #e0e0e0"></div>
<div class="t" style="left:33.39999999999998px;top:157.42px;font-size:12.5px;line-height:14.5px;height:14.5px;color:#262626;font-weight:normal;letter-spacing:-0.260px;"><u>N</u>o Fill</div>
<svg style="left:4.600000000000023px;top:180.60000000000002px" width="16" height="16" viewBox="0 0 16 16">
<circle cx="8" cy="8" r="7.6" fill="#fff"/>
<path d="M8 8L8 0.6A7.4 7.4 0 0 1 14.6 4.6Z" fill="#e8b86d"/>
<path d="M8 8L14.9 5.3A7.4 7.4 0 0 1 13.2 13.3Z" fill="#6a9e8a"/>
<path d="M8 8L12.6 13.8A7.4 7.4 0 0 1 4.2 14.4Z" fill="#3f78c4"/>
<path d="M8 8L3.6 14A7.4 7.4 0 0 1 0.7 6.8Z" fill="#d86a4a"/>
<path d="M8 8L0.8 6.1A7.4 7.4 0 0 1 7.2 0.6Z" fill="#e9a25c"/>
<path d="M8 8V0.6M8 8L14.8 5M8 8L12.9 13.6M8 8L3.9 14.2M8 8L0.7 6.4" stroke="#fff" stroke-width="1.1" fill="none"/>
</svg>
<div class="t" style="left:33.39999999999998px;top:182.42px;font-size:12.5px;line-height:14.5px;height:14.5px;color:#262626;font-weight:normal;letter-spacing:-0.364px;"><u>M</u>ore Colors...</div>
</div>
<svg style="left:422.5px;top:229.5px" width="14" height="21" viewBox="0 0 14 21">
<path d="M1 1V17L4.8 13.4L7.6 19.6L10 18.5L7.2 12.5H12.2Z" fill="#fff" stroke="#000" stroke-width="1" stroke-linejoin="miter"/></svg>
</body></html>
